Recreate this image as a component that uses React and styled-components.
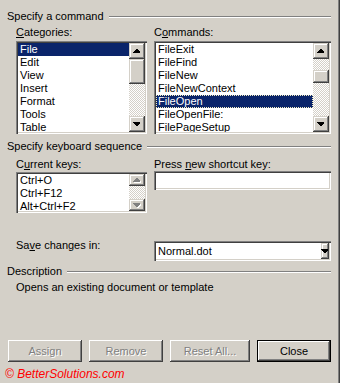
import React from "react";
import styled, { createGlobalStyle } from "styled-components";

const GlobalStyle = createGlobalStyle`
  html, body {
    margin: 0;
    padding: 0;
    background: #d4d0c8;
  }
  body {
    font-family: "Liberation Sans", Arial, sans-serif;
    font-size: 11px;
    color: #000;
  }
`;

const Dialog = styled.div`
  box-sizing: border-box;
  width: 340px;
  height: 383px;
  padding: 10px 9px 0 7px;
  background: #d4d0c8;
  box-shadow: inset -1px 0 #404040, inset -2px 0 #808080;
  display: flex;
  flex-direction: column;
  overflow: hidden;
`;

const GroupHeader = styled.div`
  display: flex;
  align-items: center;
  height: 13px;
  line-height: 13px;
  margin-top: ${(p) => p.$top || 0}px;
  white-space: nowrap;
`;

const Rule = styled.div`
  flex: 1;
  margin-left: 5px;
  border-top: 1px solid #808080;
  border-bottom: 1px solid #fff;
`;

const Columns = styled.div`
  display: grid;
  grid-template-columns: 131px 177px;
  column-gap: 7px;
  align-items: start;
  padding-left: 9px;
  margin-top: ${(p) => p.$top || 0}px;
`;

const Field = styled.div`
  display: flex;
  flex-direction: column;
`;

const Label = styled.div`
  height: 13px;
  line-height: 13px;
  margin-bottom: ${(p) => p.$gap || 0}px;
  white-space: nowrap;
`;

const sunken =
  "inset 1px 1px #808080, inset 2px 2px #404040, inset -1px -1px #fff, inset -2px -2px #d4d0c8";

const ListBox = styled.div`
  box-sizing: border-box;
  height: ${(p) => p.$h}px;
  padding: 2px;
  background: #fff;
  box-shadow: ${sunken};
  display: flex;
  overflow: hidden;
`;

const Items = styled.div`
  flex: 1;
  overflow: hidden;
`;

const Item = styled.div`
  height: 13px;
  line-height: 13px;
  padding-left: 2px;
  white-space: nowrap;
  background: ${(p) => (p.$selected ? "#0a246a" : "transparent")};
  color: ${(p) => (p.$selected ? "#fff" : "#000")};
  outline: ${(p) => (p.$focus ? "1px dotted #f4eec0" : "none")};
  outline-offset: -1px;
`;

const ScrollBar = styled.div`
  width: 16px;
  flex-shrink: 0;
  display: flex;
  flex-direction: column;
`;

const raised =
  "inset -1px -1px #404040, inset 1px 1px #d4d0c8, inset -2px -2px #808080, inset 2px 2px #fff";

const ScrollButton = styled.div`
  height: ${(p) => p.$h || 16}px;
  flex-shrink: 0;
  background: #d4d0c8;
  box-shadow: ${raised};
  display: flex;
  align-items: center;
  justify-content: center;
`;

const Thumb = styled.div`
  height: ${(p) => p.$h}px;
  flex-shrink: 0;
  background: #d4d0c8;
  box-shadow: ${raised};
`;

const Track = styled.div`
  flex: ${(p) => (p.$h ? "none" : "1")};
  height: ${(p) => (p.$h ? `${p.$h}px` : "auto")};
  background: repeating-conic-gradient(#d4d0c8 0 25%, #fff 0 50%) 0 0 / 2px 2px;
`;

const TextField = styled.div`
  box-sizing: border-box;
  height: 19px;
  background: #fff;
  box-shadow: ${sunken};
`;

const Combo = styled.div`
  box-sizing: border-box;
  height: 20px;
  margin-top: 2px;
  padding: 2px;
  background: #fff;
  box-shadow: ${sunken};
  display: flex;
`;

const ComboText = styled.div`
  flex: 1;
  line-height: 16px;
  padding-left: 2px;
`;

const Description = styled.div`
  height: 13px;
  line-height: 13px;
  margin-top: 3px;
  padding-left: 9px;
`;

const ButtonRow = styled.div`
  display: flex;
  gap: 7px;
  padding-left: 1px;
  margin-top: 46px;
`;

const Button = styled.div`
  box-sizing: border-box;
  width: ${(p) => p.$w}px;
  height: 22px;
  display: flex;
  align-items: center;
  justify-content: center;
  background: #d4d0c8;
  border: ${(p) => (p.$default ? "1px solid #000" : "none")};
  box-shadow: inset -1px -1px #404040, inset 1px 1px #fff, inset -2px -2px #808080,
    inset 2px 2px #d4d0c8;
  color: ${(p) => (p.$disabled ? "#808080" : "#000")};
  text-shadow: ${(p) => (p.$disabled ? "1px 1px 0 #fff" : "none")};
`;

const Copyright = styled.div`
  margin-top: 5px;
  margin-left: -2px;
  font-size: 12px;
  line-height: 14px;
  font-style: italic;
  color: #ff0000;
  white-space: nowrap;
`;

function Arrow({ dir = "up", disabled }) {
  const pts = dir === "up" ? "3,0 4,0 7,3 7,4 0,4 0,3" : "0,0 7,0 7,1 4,4 3,4 0,1";
  return (
    <svg width="8" height="5" viewBox="0 0 8 5" shapeRendering="crispEdges">
      {disabled && <polygon points={pts} fill="#fff" transform="translate(1 1)" />}
      <polygon points={pts} fill={disabled ? "#808080" : "#000"} />
    </svg>
  );
}

const categories = ["File", "Edit", "View", "Insert", "Format", "Tools", "Table"];
const commands = [
  "FileExit",
  "FileFind",
  "FileNew",
  "FileNewContext",
  "FileOpen",
  "FileOpenFile:",
  "FilePageSetup",
];
const keys = ["Ctrl+O", "Ctrl+F12", "Alt+Ctrl+F2"];

export default function App() {
  return (
    <>
      <GlobalStyle />
      <Dialog>
        <GroupHeader>
          Specify a command
          <Rule />
        </GroupHeader>
        <Columns $top={3}>
          <Field>
            <Label $gap={2}>
              <u>C</u>ategories:
            </Label>
            <ListBox $h={93}>
              <Items>
                {categories.map((c) => (
                  <Item key={c} $selected={c === "File"}>
                    {c}
                  </Item>
                ))}
              </Items>
              <ScrollBar>
                <ScrollButton>
                  <Arrow dir="up" />
                </ScrollButton>
                <Thumb $h={25} />
                <Track />
                <ScrollButton>
                  <Arrow dir="down" />
                </ScrollButton>
              </ScrollBar>
            </ListBox>
          </Field>
          <Field>
            <Label $gap={2}>
              C<u>o</u>mmands:
            </Label>
            <ListBox $h={93}>
              <Items>
                {commands.map((c) => (
                  <Item key={c} $selected={c === "FileOpen"} $focus={c === "FileOpen"}>
                    {c}
                  </Item>
                ))}
              </Items>
              <ScrollBar>
                <ScrollButton>
                  <Arrow dir="up" />
                </ScrollButton>
                <Track $h={11} />
                <Thumb $h={13} />
                <Track />
                <ScrollButton>
                  <Arrow dir="down" />
                </ScrollButton>
              </ScrollBar>
            </ListBox>
          </Field>
        </Columns>

        <GroupHeader $top={6}>
          Specify keyboard sequence
          <Rule />
        </GroupHeader>
        <Columns $top={5}>
          <Field>
            <Label $gap={1}>
              C<u>u</u>rrent keys:
            </Label>
            <ListBox $h={41}>
              <Items>
                {keys.map((k) => (
                  <Item key={k}>{k}</Item>
                ))}
              </Items>
              <ScrollBar>
                <ScrollButton $h={12}>
                  <Arrow dir="up" disabled />
                </ScrollButton>
                <Track />
                <ScrollButton $h={12}>
                  <Arrow dir="down" disabled />
                </ScrollButton>
              </ScrollBar>
            </ListBox>
          </Field>
          <Field>
            <Label>
              Press <u>n</u>ew shortcut key:
            </Label>
            <TextField />
          </Field>
        </Columns>

        <Columns $top={26}>
          <Label>
            Sa<u>v</u>e changes in:
          </Label>
          <Combo>
            <ComboText>Normal.dot</ComboText>
            <ScrollButton>
              <Arrow dir="down" />
            </ScrollButton>
          </Combo>
        </Columns>

        <GroupHeader $top={4}>
          Description
          <Rule />
        </GroupHeader>
        <Description>Opens an existing document or template</Description>

        <ButtonRow>
          <Button $w={74} $disabled>
            Assign
          </Button>
          <Button $w={74} $disabled>
            Remove
          </Button>
          <Button $w={80} $disabled>
            Reset All...
          </Button>
          <Button $w={74} $default>
            Close
          </Button>
        </ButtonRow>
        <Copyright>© BetterSolutions.com</Copyright>
      </Dialog>
    </>
  );
}
